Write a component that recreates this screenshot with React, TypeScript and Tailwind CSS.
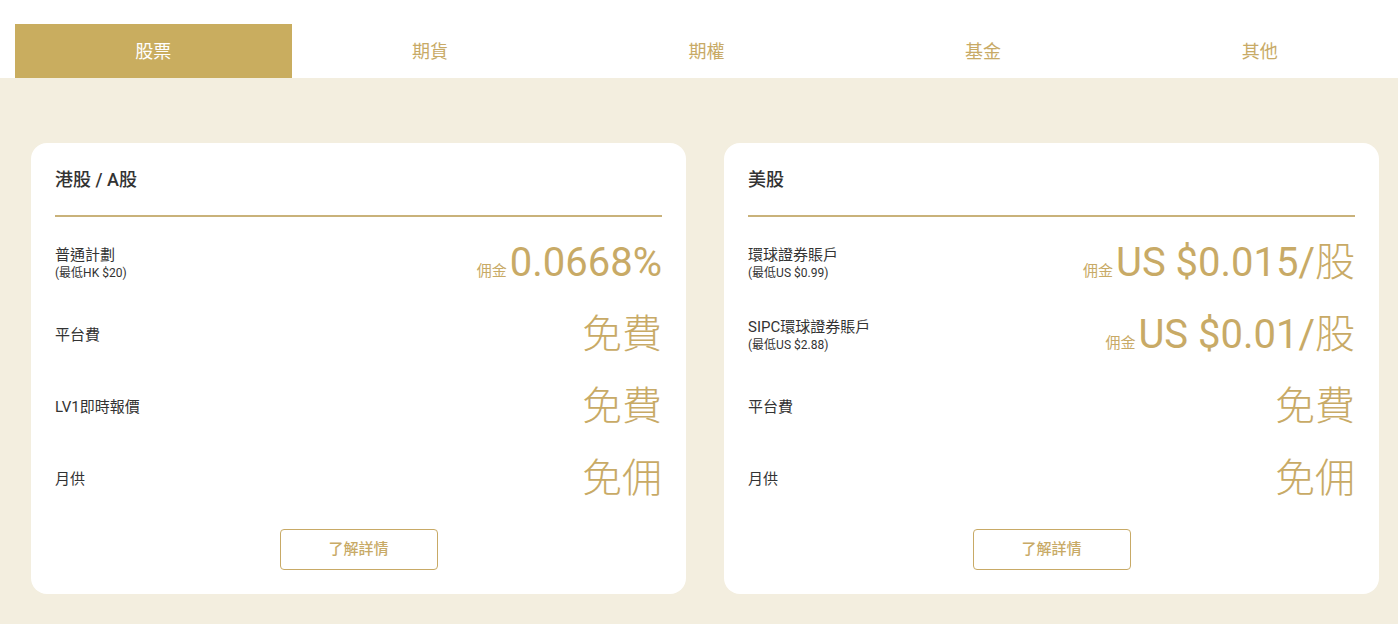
const tabs = ['股票', '期貨', '期權', '基金', '其他'];

type Row = { label: string; note?: string; prefix?: string; value: string };

const cards: { title: string; rows: Row[] }[] = [
  {
    title: '港股 / A股',
    rows: [
      { label: '普通計劃', note: '(最低HK $20)', prefix: '佣金', value: '0.0668%' },
      { label: '平台費', value: '免費' },
      { label: 'LV1即時報價', value: '免費' },
      { label: '月供', value: '免佣' },
    ],
  },
  {
    title: '美股',
    rows: [
      { label: '環球證券賬戶', note: '(最低US $0.99)', prefix: '佣金', value: 'US $0.015/股' },
      { label: 'SIPC環球證券賬戶', note: '(最低US $2.88)', prefix: '佣金', value: 'US $0.01/股' },
      { label: '平台費', value: '免費' },
      { label: '月供', value: '免佣' },
    ],
  },
];

// CJK glyphs in the big figures are drawn thinner than the digits
function Figure({ text }: { text: string }) {
  const parts = text.split(/([\u4e00-\u9fff]+)/).filter(Boolean);
  return (
    <span className="text-[40px] leading-[44px]">
      {parts.map((p, i) =>
        /[\u4e00-\u9fff]/.test(p) ? (
          <span key={i} className="font-light">{p}</span>
        ) : (
          <span key={i}>{p}</span>
        )
      )}
    </span>
  );
}

function FeeCard({ title, rows }: { title: string; rows: Row[] }) {
  return (
    <div className="flex-1 bg-white rounded-[16px] px-6 pt-[25px] pb-6">
      <h3 className="text-[18px] leading-[24px] font-medium text-[#333]">{title}</h3>
      <div className="mt-[23px] h-[1.5px] bg-[#c9b27a]" />
      <div className="mt-[10px] flex flex-col">
        {rows.map((r, i) => (
          <div key={i} className="h-[72px] flex items-center justify-between">
            <div className="flex flex-col">
              <span className="text-[15px] leading-[20px] text-[#333]">{r.label}</span>
              {r.note && <span className="text-[12px] leading-[16px] text-[#333]">{r.note}</span>}
            </div>
            <div className="flex items-baseline gap-[3px] text-[#c8aa66]">
              {r.prefix && <span className="text-[15px]">{r.prefix}</span>}
              <Figure text={r.value} />
            </div>
          </div>
        ))}
      </div>
      <div className="mt-[14px] flex justify-center">
        <button className="w-[158px] h-[41px] border border-[#c8aa66] rounded-[4px] text-[15px] font-medium text-[#c8aa66]">
          了解詳情
        </button>
      </div>
    </div>
  );
}

export default function App() {
  return (
    <div
      className="w-[1398px] h-[624px] bg-white flex flex-col overflow-hidden"
      style={{ fontFamily: 'Roboto, "Noto Sans CJK TC", sans-serif' }}
    >
      <div className="pt-6 pl-[15px] flex">
        {tabs.map((t, i) => (
          <div
            key={t}
            className={
              i === 0
                ? 'w-[276.6px] h-[54px] flex items-center justify-center text-[18px] text-white bg-[#c9ad5f]'
                : 'w-[276.6px] h-[54px] flex items-center justify-center text-[18px] text-[#c8aa66]'
            }
          >
            {t}
          </div>
        ))}
      </div>
      <div className="flex-1 bg-[#f3eedf] pl-[31px] pr-[19px] pt-[65px] pb-[30px] flex gap-[38px] items-start">
        {cards.map((c) => (
          <FeeCard key={c.title} title={c.title} rows={c.rows} />
        ))}
      </div>
    </div>
  );
}
